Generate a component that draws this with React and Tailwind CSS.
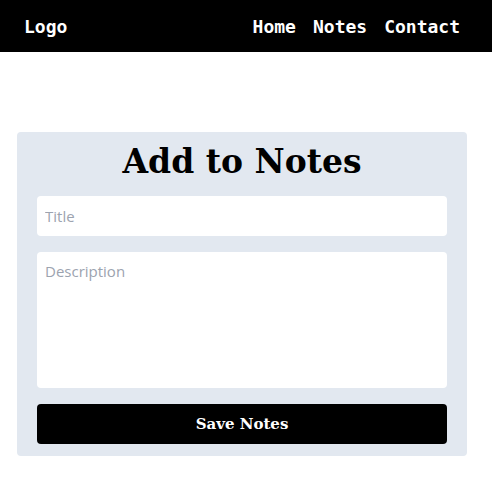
export default function App() {
  return (
    <div className="min-h-screen bg-white">
      <nav className="flex h-[52px] items-center justify-between bg-black pl-6 pr-8 font-['DejaVu_Sans_Mono',monospace] text-[18px] font-bold text-white">
        <span>Logo</span>
        <div className="flex gap-[17px]">
          <span>Home</span>
          <span>Notes</span>
          <span>Contact</span>
        </div>
      </nav>
      <div className="mt-20 pl-[17px]">
        <div className="flex w-[450px] flex-col gap-4 rounded bg-[#e2e8f0] px-5 pt-2 pb-3">
          <h1 className="pt-[3px] text-center font-['DejaVu_Serif',serif] text-[33px] leading-[37px] font-bold text-black">Add to Notes</h1>
          <input
            placeholder="Title"
            className="h-10 w-full rounded bg-white px-2 font-['Open_Sans',sans-serif] text-[15px] outline-none placeholder:text-[#9ca3af]"
          />
          <textarea
            placeholder="Description"
            className="h-[136px] w-full resize-none rounded bg-white p-2 font-['Open_Sans',sans-serif] text-[15px] outline-none placeholder:text-[#9ca3af]"
          />
          <button className="h-10 w-full rounded bg-black font-['DejaVu_Serif',serif] text-[15px] font-bold text-white">
            Save Notes
          </button>
        </div>
      </div>
    </div>
  );
}
